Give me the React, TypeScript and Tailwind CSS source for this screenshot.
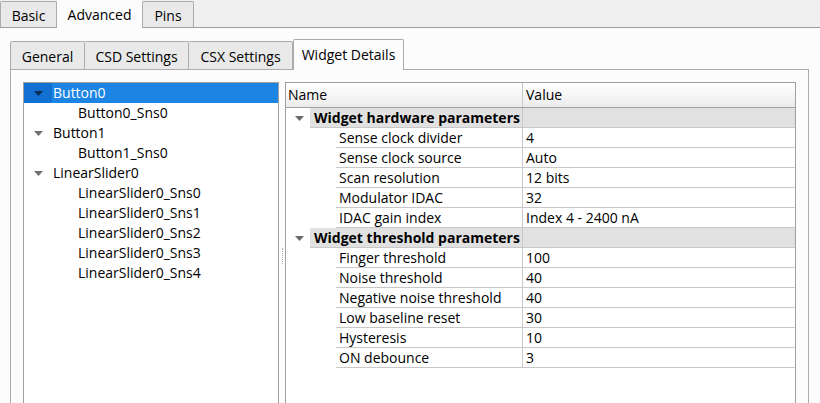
import React from "react";

const treeRows: [string, number, boolean][] = [
  ["Button0", 0, true],
  ["Button0_Sns0", 1, false],
  ["Button1", 0, true],
  ["Button1_Sns0", 1, false],
  ["LinearSlider0", 0, true],
  ["LinearSlider0_Sns0", 1, false],
  ["LinearSlider0_Sns1", 1, false],
  ["LinearSlider0_Sns2", 1, false],
  ["LinearSlider0_Sns3", 1, false],
  ["LinearSlider0_Sns4", 1, false],
];

const groups: [string, [string, string][]][] = [
  ["Widget hardware parameters", [
    ["Sense clock divider", "4"],
    ["Sense clock source", "Auto"],
    ["Scan resolution", "12 bits"],
    ["Modulator IDAC", "32"],
    ["IDAC gain index", "Index 4 - 2400 nA"],
  ]],
  ["Widget threshold parameters", [
    ["Finger threshold", "100"],
    ["Noise threshold", "40"],
    ["Negative noise threshold", "40"],
    ["Low baseline reset", "30"],
    ["Hysteresis", "10"],
    ["ON debounce", "3"],
  ]],
];

function Caret({ color }: { color: string }) {
  return <svg width="9" height="5" viewBox="0 0 9 5"><path d="M0 0h9L4.5 5z" fill={color} /></svg>;
}

export default function App() {
  return <div className="relative h-[403px] w-[820px] overflow-hidden whitespace-nowrap bg-[#fcfcfc] font-['Open_Sans',sans-serif] text-[14px] leading-none text-black">
    {/* outer tabs */}
    <div className="flex h-[28px] items-end border-b border-[#a0a0a0] bg-[#f0f0f0]">
      <div className="flex h-[26px] w-[57px] items-center justify-center rounded-t-[2px] border border-b-0 border-[#acacac] bg-[#e9e9e9] pt-[2px]">Basic</div>
      <div className="relative -mb-px flex h-[28px] w-[85px] items-center justify-center bg-[#fcfcfc] pt-[1px]">Advanced</div>
      <div className="flex h-[26px] w-[52px] items-center justify-center rounded-t-[2px] border border-b-0 border-[#acacac] bg-[#e9e9e9] pt-[2px]">Pins</div>
    </div>

    {/* inner tabs */}
    <div className="ml-[10px] mt-[11px] flex h-[30px] items-end">
      <div className="flex h-[28px] w-[75px] items-center justify-center rounded-t-[2px] border border-b-0 border-[#acacac] bg-[#e9e9e9] pt-[2px]">General</div>
      <div className="flex h-[28px] w-[104px] items-center justify-center rounded-t-[2px] border border-b-0 border-l-0 border-[#acacac] bg-[#e9e9e9] pt-[2px]">CSD Settings</div>
      <div className="flex h-[28px] w-[104px] items-center justify-center rounded-t-[2px] border border-b-0 border-l-0 border-[#acacac] bg-[#e9e9e9] pt-[2px]">CSX Settings</div>
      <div className="relative z-10 -mb-px flex h-[31px] w-[111px] items-center justify-center rounded-t-[2px] border border-b-0 border-[#acacac] bg-[#fcfcfc]">Widget Details</div>
    </div>

    {/* panel */}
    <div className="ml-[10px] flex h-[340px] w-[799px] border border-[#acacac] bg-[#fcfcfc] pl-[12px] pr-[12px] pt-[12px]">
      {/* tree */}
      <div className="h-full w-[256px] border border-[#a0a0a0] bg-white">
        {treeRows.map(([label, level, hasKids], i) => {
          const sel = i === 0;
          return <div key={label} className="flex h-[20px] items-center">
            <div className={`flex h-full w-[28px] shrink-0 items-center justify-center ${sel ? "bg-[#1270d2]" : ""}`}>
              {hasKids && <Caret color={sel ? "#0c2d55" : "#707070"} />}
            </div>
            <div className={`flex h-full items-center ${sel ? "flex-1 bg-[#1c84e3] text-white" : ""} ${level ? "pl-[26px]" : "pl-[1px]"}`}>{label}</div>
          </div>;
        })}
      </div>

      {/* splitter */}
      <div className="flex w-[6px] shrink-0 justify-center pt-[166px]">
        <div className="h-[16px] w-px border-l border-dotted border-[#b0b0b0]" />
      </div>

      {/* property grid */}
      <div className="h-full flex-1 border border-[#a0a0a0] bg-white">
        <div className="flex h-[25px] border-b border-[#a0a0a0] bg-gradient-to-b from-white to-[#ececec]">
          <div className="flex w-[237px] items-center border-r border-[#c8c8c8] pl-[2px]">Name</div>
          <div className="flex flex-1 items-center pl-[3px]">Value</div>
        </div>
        {groups.map(([title, rows]) => <div key={title}>
          <div className="flex h-[20px]">
            <div className="flex w-[24px] shrink-0 items-center justify-center pl-[2px]"><Caret color="#6a6a6a" /></div>
            <div className="flex flex-1 border-b border-[#c8c8c8] bg-[#e1e1e1]">
              <div className="flex w-[213px] items-center border-r border-[#c8c8c8] pl-[4px] font-bold">{title}</div>
              <div className="flex-1" />
            </div>
          </div>
          {rows.map(([n, v]) => <div key={n} className="flex h-[20px]">
            <div className="w-[50px] shrink-0" />
            <div className="flex flex-1 border-b border-[#c8c8c8]">
              <div className="flex w-[187px] items-center border-r border-[#c8c8c8] pl-[3px]">{n}</div>
              <div className="flex flex-1 items-center pl-[3px]">{v}</div>
            </div>
          </div>)}
        </div>)}
      </div>
    </div>
  </div>;
}
